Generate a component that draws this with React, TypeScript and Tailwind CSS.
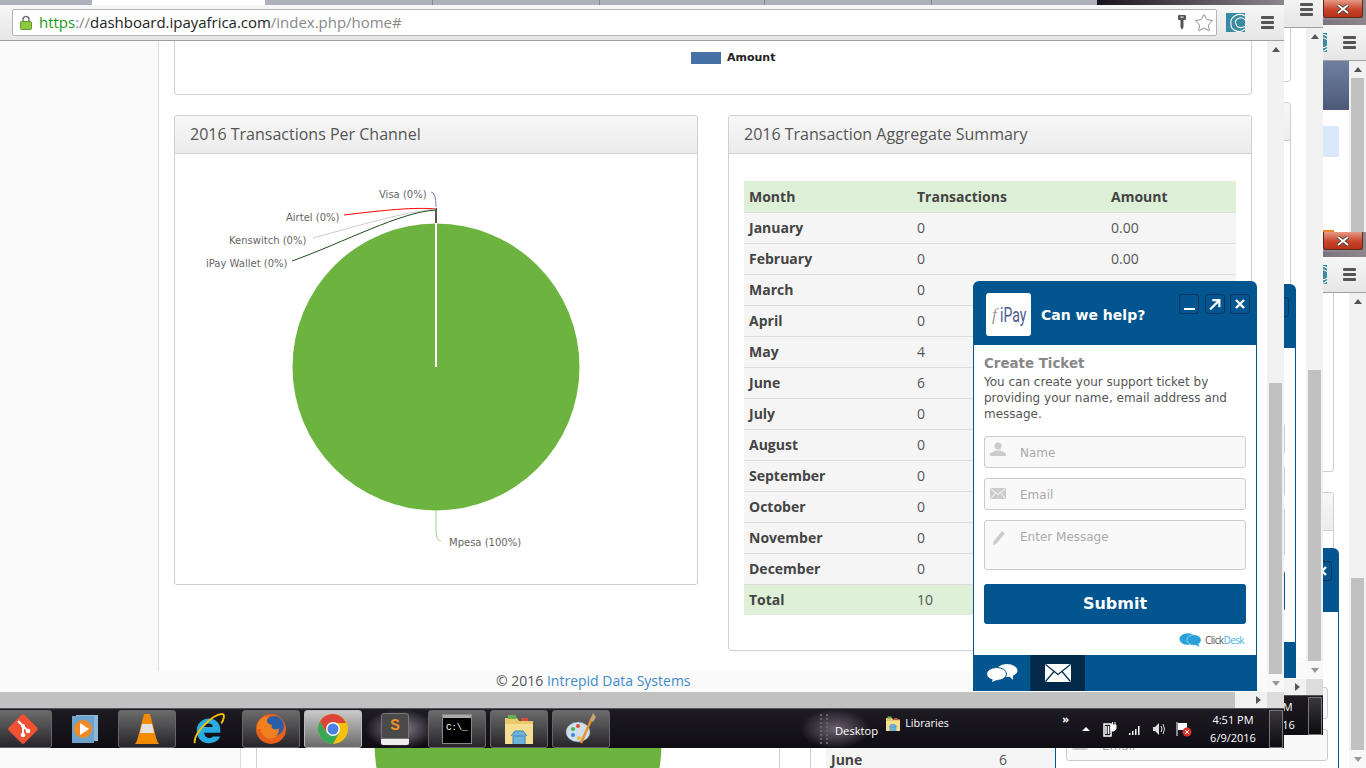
import React from 'react';
import { Star } from 'lucide-react';

const months = [
  { name: 'January', count: '0', amount: '0.00' },
  { name: 'February', count: '0', amount: '0.00' },
  { name: 'March', count: '0', amount: '' },
  { name: 'April', count: '0', amount: '' },
  { name: 'May', count: '4', amount: '' },
  { name: 'June', count: '6', amount: '' },
  { name: 'July', count: '0', amount: '' },
  { name: 'August', count: '0', amount: '' },
  { name: 'September', count: '0', amount: '' },
  { name: 'October', count: '0', amount: '' },
  { name: 'November', count: '0', amount: '' },
  { name: 'December', count: '0', amount: '' },
];

const PieChart = ({ labels }: { labels: boolean }) => (
  <svg viewBox="175 154 522 430" className="block w-[522px] h-[430px]">
    <circle cx="436" cy="367" r="143.5" fill="#6db33f" />
    <line x1="436" y1="223" x2="436" y2="367" stroke="#fff" strokeWidth="2" />
    <line x1="436" y1="208" x2="436" y2="223" stroke="#5c5548" strokeWidth="2" />
    <path d="M431 192 Q436 192 436 207" fill="none" stroke="#6f7fb5" strokeWidth="1" />
    <path d="M344 215 C385 210 415 207 436 209" fill="none" stroke="#ff0000" strokeWidth="1" />
    <path d="M313 238 C360 225 405 212 436 209" fill="none" stroke="#cccccc" strokeWidth="1" />
    <path d="M292 261 C345 242 400 212 436 210" fill="none" stroke="#1d4d1d" strokeWidth="1" />
    <path d="M436 510 L436 531 Q436 541 441 541" fill="none" stroke="#a6d184" strokeWidth="1" />
    {labels && (
      <g className="font-['DejaVu_Sans',sans-serif] text-[10px]" fill="#666">
        <text x="379" y="198">Visa (0%)</text>
        <text x="286" y="221">Airtel (0%)</text>
        <text x="229" y="244">Kenswitch (0%)</text>
        <text x="206" y="267">iPay Wallet (0%)</text>
        <text x="449" y="546">Mpesa (100%)</text>
      </g>
    )}
  </svg>
);

const PanelHeader = ({ title }: { title: string }) => (
  <div className="h-[38px] pl-[15px] pb-[2px] flex items-center text-[16px] text-[#555] bg-[linear-gradient(to_bottom,#f7f7f7,#ececec)] border-b border-[#d0d0d0] rounded-t-[3px]">
    {title}
  </div>
);

// `only` = the one table row this window still shows, the rest sits behind the window in front
const PageContent = ({ full, only }: { full: boolean; only?: string }) => {
  const show = (name: string) => full || name === only;
  return (
    <div className="pl-[15px] pb-[20px] w-[1093px] shrink-0 font-['Open_Sans',sans-serif]">
      <div className="h-[200px] w-[1078px] pt-[155px] pl-[516px] border border-[#d0d0d0] rounded-[3px] bg-white flex items-start gap-[6px]">
        <div className="w-[30px] h-[12px] mt-[1px] bg-[#4571a7]" />
        {full && <span className="text-[11px] leading-[14px] font-bold text-[#222] font-['DejaVu_Sans',sans-serif]">Amount</span>}
      </div>
      <div className="mt-[20px] flex items-start gap-[30px]">
        <section className="w-[524px] border border-[#d0d0d0] rounded-[3px] bg-white">
          <PanelHeader title={full ? '2016 Transactions Per Channel' : ''} />
          <PieChart labels={full} />
        </section>
        <section className="w-[524px] border border-[#d0d0d0] rounded-[3px] bg-white">
          <PanelHeader title={full ? '2016 Transaction Aggregate Summary' : ''} />
          <div className="px-[15px] pt-[27px] pb-[35px]">
            <table className="w-[492px] table-fixed border-collapse text-[14px] text-[#555]">
              <colgroup>
                <col className="w-[168px]" />
                <col className="w-[194px]" />
                <col />
              </colgroup>
              <thead>
                <tr className="h-[31px] bg-[#dff0d8] text-left font-bold text-[#444]">
                  <th className="pl-[5px]">{full && 'Month'}</th>
                  <th className="pl-[5px]">{full && 'Transactions'}</th>
                  <th className="pl-[5px]">{full && 'Amount'}</th>
                </tr>
              </thead>
              <tbody>
                {months.map((m) => (
                  <tr key={m.name} className="h-[31px] bg-[#f5f5f5] border-t border-[#ddd]">
                    <td className="pl-[5px] font-bold text-[#444]">{show(m.name) && m.name}</td>
                    <td className="pl-[5px]">{show(m.name) && m.count}</td>
                    <td className="pl-[5px]">{show(m.name) && m.amount}</td>
                  </tr>
                ))}
                <tr className="h-[31px] bg-[#dff0d8] border-t border-[#ddd]">
                  <td className="pl-[5px] font-bold text-[#444]">{full && 'Total'}</td>
                  <td className="pl-[5px]">{full && '10'}</td>
                  <td className="pl-[5px]" />
                </tr>
              </tbody>
            </table>
          </div>
        </section>
      </div>
    </div>
  );
};

const Page = ({ sidebar, scroll, full = false, only }: { sidebar: string; scroll: string; full?: boolean; only?: string }) => (
  <div className={scroll}>
    <div className="flex">
      <aside className={`${sidebar} shrink-0 bg-[#fafafa] border-r border-[#ddd]`} />
      <PageContent full={full} only={only} />
    </div>
    <div className="h-[22px] pl-[496px] bg-[#fafafa] text-[14px] leading-[20px] text-[#555] font-['Open_Sans',sans-serif]">
      {full && (
        <>
          © 2016 <span className="text-[#428bca]">Intrepid Data Systems</span>
        </>
      )}
    </div>
  </div>
);

const ChatButton = ({ children }: { children: React.ReactNode }) => (
  <div className="w-[20px] h-[20px] flex items-center justify-center border border-[#01365c] rounded-[3px]">{children}</div>
);

const Field = ({ icon, placeholder }: { icon: React.ReactNode; placeholder?: string }) => (
  <div className="relative h-[32px]">
    <div className="absolute left-[6px] top-[6px]">{icon}</div>
    <input
      readOnly
      placeholder={placeholder}
      className="w-full h-full pl-[35px] pt-[1px] bg-[#f9f9f9] border border-[#ccc] rounded-[3px] text-[12px] placeholder:text-[#aaa]"
    />
  </div>
);

const ChatWidget = ({ place, compact, emailText = true }: { place: string; compact?: boolean; emailText?: boolean }) => (
  <div className={`absolute ${place} w-[284px] flex flex-col font-['DejaVu_Sans',sans-serif]`}>
    <div className="h-[64px] shrink-0 pl-[13px] pr-[7px] bg-[#02558f] rounded-t-[6px] flex items-start">
      <div className="mt-[12px] w-[45px] h-[43px] bg-white rounded-[3px] flex items-center overflow-hidden">
        {!compact && (
          <>
            <span className="ml-[6px] text-[17px] italic text-[#999] font-['Liberation_Serif',serif]">f</span>
            <span className="ml-[3px] origin-left scale-x-[0.7] text-[20px] text-[#4a5c8c] font-['Roboto',sans-serif]">iPay</span>
          </>
        )}
      </div>
      {!compact && <span className="ml-[10px] mt-[26px] text-[14px] leading-[17px] font-bold text-white">Can we help?</span>}
      <div className="ml-auto mt-[13px] flex gap-[5.5px]">
        <ChatButton>
          <div className="w-[11px] h-[2px] mt-[9px] bg-white" />
        </ChatButton>
        <ChatButton>
          <svg viewBox="0 0 12 12" className="w-[13px] h-[13px]">
            <path d="M2 10.5 L9.5 3 M4 2 H10.5 V8.5" fill="none" stroke="#fff" strokeWidth="2" />
          </svg>
        </ChatButton>
        <ChatButton>
          <svg viewBox="0 0 12 12" className="w-[12px] h-[12px]">
            <path d="M2 2 L10 10 M10 2 L2 10" fill="none" stroke="#fff" strokeWidth="2.4" />
          </svg>
        </ChatButton>
      </div>
    </div>
    <div className="flex-1 min-h-0 flex flex-col px-[10px] bg-white border-x border-[#02558f]">
      <div className={compact ? 'pt-[1px] mb-[8px] h-[67px]' : 'pt-[10px] mb-[14px]'}>
        {!compact && (
          <>
            <h3 className="h-[19px] text-[13.4px] leading-[18px] font-bold text-[#888]">Create Ticket</h3>
            <p className="text-[12px] leading-[16px] text-[#555]">
              You can create your support ticket by providing your name, email address and message.
            </p>
          </>
        )}
      </div>
      <Field
        placeholder={compact ? undefined : 'Name'}
        icon={
          <svg viewBox="0 0 16 14" className="w-[16px] h-[14px]">
            <circle cx="8" cy="4" r="3.6" fill="#ccc" />
            <path d="M0 14 V11.5 L5.5 8.5 H10.5 L16 11.5 V14 Z" fill="#ccc" />
          </svg>
        }
      />
      <div className="mt-[10px]">
        <Field
          placeholder={emailText ? 'Email' : undefined}
          icon={
            <svg viewBox="0 0 16 11" className="w-[16px] h-[11px] mt-[4px]">
              <rect width="16" height="11" fill="#ccc" />
              <path d="M0.5 0.5 L8 6.5 L15.5 0.5 M0.5 10.5 L5.5 5 M15.5 10.5 L10.5 5" fill="none" stroke="#f9f9f9" strokeWidth="1" />
            </svg>
          }
        />
      </div>
      <div className="relative mt-[10px] h-[50px]">
        <svg viewBox="0 0 14 16" className="absolute left-[8px] top-[10px] w-[14px] h-[16px]">
          <path d="M10 1 L13 3.5 L4 14 L1 15 L1.5 11.5 Z" fill="#ccc" />
        </svg>
        <textarea
          readOnly
          placeholder={compact ? undefined : 'Enter Message'}
          className="block w-full h-full pl-[35px] pt-[8px] resize-none bg-[#f9f9f9] border border-[#ccc] rounded-[3px] text-[12px] leading-[16px] placeholder:text-[#aaa]"
        />
      </div>
      <button className="mt-[14px] h-[40px] shrink-0 bg-[#02558f] rounded-[3px] text-[16px] font-bold text-white">
        {!compact && 'Submit'}
      </button>
      {!compact && (
        <div className="mt-[8px] flex items-center justify-end pr-[2px] gap-[3px]">
          <svg viewBox="0 0 26 16" className="w-[23px] h-[16px]">
            <ellipse cx="10" cy="7" rx="9.5" ry="6.5" fill="#2aa0d8" />
            <ellipse cx="17" cy="8" rx="8" ry="6" fill="#2aa0d8" stroke="#fff" strokeWidth="0.5" />
            <path d="M16 12 L23 16 L21 10 Z" fill="#2aa0d8" />
          </svg>
          <span className="text-[10px] tracking-[-0.6px] text-[#555] font-['Open_Sans',sans-serif]">
            Click<span className="text-[#3fb4e0]">Desk</span>
          </span>
        </div>
      )}
    </div>
    <div className="h-[36px] shrink-0 bg-[#02558f] flex">
      <div className="w-[58px] flex items-center justify-center border-r border-[#01365c]">
        <svg viewBox="0 0 32 18" className="w-[32px] h-[18px]">
          <ellipse cx="21" cy="6.5" rx="10.5" ry="6.5" fill="#fff" />
          <path d="M22 11 L27 16 L27 10 Z" fill="#fff" />
          <ellipse cx="10.5" cy="10" rx="10" ry="6.5" stroke="#02558f" strokeWidth="1" fill="#fff" />
          <path d="M7 15 L6 18 L12 15.5 Z" fill="#fff" />
        </svg>
      </div>
      <div className="w-[54px] bg-[#012a4a] flex items-center justify-center">
        <svg viewBox="0 0 26 18" className="w-[26px] h-[18px]">
          <rect width="26" height="18" rx="1" fill="#fff" />
          <path d="M0.5 0.5 L13 10.5 L25.5 0.5 M0.5 17.5 L9 7.5 M25.5 17.5 L17 7.5" fill="none" stroke="#012a4a" strokeWidth="1.2" />
        </svg>
      </div>
    </div>
  </div>
);

const Hamburger = () => (
  <div className="w-[13px] flex flex-col gap-[2px]">
    <div className="h-[3px] bg-[#555] rounded-[1px]" />
    <div className="h-[3px] bg-[#555] rounded-[1px]" />
    <div className="h-[3px] bg-[#555] rounded-[1px]" />
  </div>
);

const Toolbar = ({ url }: { url: boolean }) => (
  <div className="h-[36px] shrink-0 flex items-center bg-[linear-gradient(to_bottom,#f6f6f6,#e6e6e6)] border-b border-[#a0a0a0]">
    <div className="ml-[12px] flex-1 min-w-0 h-[27px] flex items-center bg-white border border-[#b4b4b4] rounded-[2px] overflow-hidden">
      <svg viewBox="0 0 12 15" className="ml-[7px] w-[12px] h-[15px] shrink-0">
        <path d="M3 7 V4.5 a3 3 0 0 1 6 0 V7" fill="none" stroke="#777" strokeWidth="1.5" />
        <rect x="0.5" y="6.5" width="11" height="8" rx="1" fill="#8dc63f" stroke="#5f9a2a" />
      </svg>
      {url && (
        <span className="ml-[7px] text-[15px] tracking-[-0.02px] whitespace-nowrap text-[#888] font-['Open_Sans',sans-serif]">
          <span className="text-[#1a9a1a]">https</span>://<span className="text-[#222]">dashboard.ipayafrica.com</span>/index.php/home#
        </span>
      )}
      <svg viewBox="0 0 10 15" className="ml-auto w-[10px] h-[15px] shrink-0">
        <path d="M1 1 Q1 0 2 0 H8 Q9 0 9 1 V4 Q9 5 8 5 H6.5 V12 L5 15 L3.5 12 V5 H2 Q1 5 1 4 Z" fill="#555" />
        <rect x="3.5" y="1.5" width="3" height="1.2" fill="#eee" />
      </svg>
      <Star className="ml-[7px] mr-[2px] w-[20px] h-[20px] shrink-0 text-[#777]" strokeWidth={1} />
    </div>
    <svg viewBox="0 0 19 19" className="ml-[9px] w-[19px] h-[19px] shrink-0">
      <rect width="19" height="19" fill="#3a8aa3" />
      <path d="M19 3 a9 8 0 0 0 -14 8 a8 7 0 0 0 14 5 M19 7 a5 4 0 0 0 -9 4 a5 4 0 0 0 9 2" fill="none" stroke="#fff" strokeWidth="1.1" />
    </svg>
    <div className="ml-[16px] mr-[10px] shrink-0">
      <Hamburger />
    </div>
  </div>
);

const VScroll = ({ thumb }: { thumb: string }) => (
  <div className="w-[17px] shrink-0 flex flex-col bg-[#f1f1f1]">
    <div className="h-[17px] shrink-0 flex items-center justify-center">
      <div className="w-0 h-0 border-x-[4px] border-x-transparent border-b-[5px] border-b-[#555]" />
    </div>
    <div className={`${thumb} w-[13px] ml-[2px] shrink-0 bg-[#c1c1c1]`} />
    <div className="mt-auto h-[18px] shrink-0 flex items-center justify-center bg-[#f8f8f8] z-10">
      <div className="w-0 h-0 border-x-[4px] border-x-transparent border-t-[5px] border-t-[#999]" />
    </div>
  </div>
);

const HScroll = () => (
  <div className="h-[16px] shrink-0 flex bg-[#f1f1f1]">
    <div className="flex-1 bg-[#c1c1c1]" />
    <div className="w-[32px] flex items-center justify-end pr-[6px]">
      <div className="w-0 h-0 border-y-[4px] border-y-transparent border-l-[5px] border-l-[#555]" />
    </div>
    <div className="w-[17px] bg-[#dcdcdc]" />
  </div>
);

const TaskButton = ({ framed, active, children }: { framed?: boolean; active?: boolean; children: React.ReactNode }) => (
  <div
    className={`w-[58px] h-[38px] shrink-0 flex items-center justify-center rounded-[3px] ${
      active
        ? 'border border-[#bbb] bg-[linear-gradient(to_bottom,#c9c9c9,#6a6a6a)]'
        : framed
          ? 'border border-[#666] bg-[linear-gradient(to_bottom,#6b6b6b,#26242a)]'
          : ''
    }`}
  >
    {children}
  </div>
);

const GitIcon = () => (
  <svg viewBox="0 0 32 32" className="w-[32px] h-[32px]">
    <rect x="5" y="5" width="22" height="22" rx="2" transform="rotate(45 16 16)" fill="#f05133" />
    <path d="M11 8 L16 13 V22 M16 13 L21 18" fill="none" stroke="#fff" strokeWidth="2" />
    <circle cx="16" cy="13" r="2" fill="#fff" />
    <circle cx="16" cy="22" r="2.3" fill="#fff" />
    <circle cx="21" cy="18" r="2.3" fill="#fff" />
  </svg>
);

const PlayerIcon = () => (
  <svg viewBox="0 0 28 30" className="w-[28px] h-[30px]">
    <rect x="5" y="1" width="22" height="26" fill="#8fb8d8" />
    <rect x="1" y="2" width="22" height="27" fill="#6da3cc" />
    <circle cx="12" cy="15" r="9" fill="#f08a24" />
    <path d="M9 9 L18 15 L9 21 Z" fill="#fff" />
  </svg>
);

const VlcIcon = () => (
  <svg viewBox="0 0 28 34" className="w-[28px] h-[34px]">
    <path d="M2 32 L5 27 H23 L26 32 Z" fill="#f08a00" />
    <path d="M11 2 H17 L24 29 H4 Z" fill="#f58b00" />
    <path d="M9 12 H19 L21 21 H7 Z" fill="#e2e2e2" />
  </svg>
);

const IeIcon = () => (
  <svg viewBox="0 0 32 36" className="w-[32px] h-[34px]">
    <path d="M7 22 H28 C29 11 22 7 16 7 C8 7 3 13 3 20 C3 28 9 33 16 33 C22 33 26 30 28 26 H20 C18 29 11 28 11 22 Z M11 16 C12 11 20 11 20 16 Z" fill="#29abe2" fillRule="evenodd" />
    <path d="M1 33 C-1 24 18 3 30 2 C33 2 32 8 29 12" fill="none" stroke="#f7c200" strokeWidth="2" />
  </svg>
);

const FirefoxIcon = () => (
  <svg viewBox="0 0 32 36" className="w-[32px] h-[36px]">
    <circle cx="16" cy="18" r="15" fill="#e8601c" />
    <circle cx="19" cy="15" r="10" fill="#2b5da8" />
    <path d="M2 18 C2 8 10 4 14 6 C10 9 12 13 17 14 C15 18 21 20 24 17 C24 26 17 29 12 27 C8 25 6 22 6 18 Z" fill="#f0801e" />
  </svg>
);

const ChromeIcon = () => (
  <svg viewBox="0 0 32 32" className="w-[32px] h-[32px]">
    <circle cx="16" cy="16" r="15" fill="#f4c20d" />
    <path d="M16 1 A15 15 0 0 0 3 8.5 L9 19 L16 10 H29 A15 15 0 0 0 16 1 Z" fill="#db4437" />
    <path d="M3 8.5 A15 15 0 0 0 16 31 L22 20 L9 19 Z" fill="#3aa757" />
    <circle cx="16" cy="16" r="7" fill="#fff" />
    <circle cx="16" cy="16" r="5.5" fill="#4a80e8" />
  </svg>
);

const SublimeIcon = ({ label }: { label: boolean }) => (
  <div className="w-[28px] h-[32px] flex flex-col">
    <div className="h-[26px] bg-[#4a4a4a] border border-[#777] rounded-t-[3px] flex items-center justify-center text-[16px] font-bold text-[#e8912d] font-['Liberation_Mono',monospace]">
      {label && 'S'}
    </div>
    <div className="h-[6px] bg-[#eee] rounded-b-[2px]" />
  </div>
);

const CmdIcon = ({ label }: { label: boolean }) => (
  <div className="w-[30px] h-[30px] bg-black border border-[#888]">
    <div className="h-[3px] bg-[#aaa]" />
    {label && <div className="mt-[5px] ml-[3px] text-[9px] leading-[10px] text-white font-['Liberation_Mono',monospace]">C:\_</div>}
  </div>
);

const FolderIcon = ({ small }: { small?: boolean }) => (
  <svg viewBox="0 0 32 34" className={small ? 'w-[16px] h-[17px]' : 'w-[32px] h-[34px]'}>
    <path d="M2 6 H14 L16 9 H30 V32 H2 Z" fill="#eac96a" />
    <rect x="5" y="3" width="8" height="4" fill="#6ab04c" />
    <rect x="18" y="6" width="7" height="3" fill="#d84a3a" />
    <rect x="2" y="12" width="28" height="20" fill="#f5dd92" />
    <path d="M10 32 V24 H22 V32 M8 24 L12 19 H20 L24 24" fill="#6db3dc" stroke="#3d86b5" strokeWidth="1" />
  </svg>
);

const PaintIcon = () => (
  <svg viewBox="0 0 32 34" className="w-[32px] h-[34px]">
    <ellipse cx="13" cy="20" rx="12" ry="10" fill="#cfe0ea" stroke="#88a" strokeWidth="0.5" />
    <circle cx="8" cy="17" r="2" fill="#4caf50" />
    <circle cx="13" cy="14" r="2" fill="#e64a3a" />
    <circle cx="8" cy="23" r="2" fill="#3a8ae6" />
    <circle cx="14" cy="26" r="2" fill="#e6c23a" />
    <path d="M16 31 L27 6" stroke="#e8912d" strokeWidth="2.5" />
    <path d="M25 8 L28 1 L31 5 L28 10 Z" fill="#c9a27a" />
  </svg>
);

const Taskbar = ({ labels }: { labels: boolean }) => (
  <div className="relative h-[40px] shrink-0 flex items-center overflow-hidden border-t border-[#55525a] bg-[linear-gradient(to_bottom,#1e1b23,#0f0d13)] font-['Open_Sans',sans-serif] text-white">
    <div className="absolute left-[365px] top-0 w-[70px] h-[40px] bg-[radial-gradient(closest-side,#8c8090,transparent)]" />
    <div className="absolute left-[800px] top-0 w-[70px] h-[40px] bg-[radial-gradient(closest-side,#6c6270,transparent)]" />
    <div className="relative -ml-[6px] flex gap-[4px]">
      <TaskButton framed><GitIcon /></TaskButton>
      <TaskButton><PlayerIcon /></TaskButton>
      <TaskButton framed><VlcIcon /></TaskButton>
      <TaskButton><IeIcon /></TaskButton>
      <TaskButton framed><FirefoxIcon /></TaskButton>
      <TaskButton active><ChromeIcon /></TaskButton>
      <TaskButton><SublimeIcon label={labels} /></TaskButton>
      <TaskButton framed><CmdIcon label={labels} /></TaskButton>
      <TaskButton framed><FolderIcon /></TaskButton>
      <TaskButton framed><PaintIcon /></TaskButton>
    </div>
    <div className="relative ml-[210px] w-[8px] h-[30px] border-x-2 border-dotted border-[#666]" />
    {labels && (
      <>
        <span className="relative ml-[7px] mt-[6px] text-[11.2px]">Desktop</span>
        <div className="relative ml-[7px] -mt-[10px]"><FolderIcon small /></div>
        <span className="relative ml-[4px] -mt-[10px] text-[10.8px]">Libraries</span>
      </>
    )}
    <div className="relative ml-auto flex items-center">
      <span className="-mt-[20px] text-[11px] font-bold leading-none">»</span>
      <div className="ml-[13px] w-0 h-0 border-x-[4px] border-x-transparent border-b-[4px] border-b-white" />
      <svg viewBox="0 0 14 16" className="ml-[13px] w-[14px] h-[16px]">
        <path d="M1 3 H8 V15 H1 Z M3 5 V13 M5.5 5 V13" fill="none" stroke="#fff" strokeWidth="1.5" />
        <path d="M8 4 H13 V8 L11 10 H8 Z M9.5 1 V4 M12 1 V4" fill="#fff" stroke="#fff" />
      </svg>
      <svg viewBox="0 0 14 12" className="ml-[11px] w-[14px] h-[12px]">
        <path d="M1 10 h1.5 v2 h-1.5 Z M4 8 h1.5 v4 h-1.5 Z M7 6 h1.5 v6 h-1.5 Z M10 3 h1.5 v9 h-1.5 Z" fill="#fff" />
      </svg>
      <svg viewBox="0 0 14 14" className="ml-[10px] w-[14px] h-[14px]">
        <path d="M1 5 H3 L7 1 V13 L3 9 H1 Z" fill="#ddd" />
        <path d="M9 4 Q11 7 9 10 M11 2 Q14 7 11 12" fill="none" stroke="#ddd" />
      </svg>
      <svg viewBox="0 0 16 16" className="ml-[10px] w-[16px] h-[16px]">
        <path d="M1 1 V15" stroke="#fff" />
        <path d="M2 2 H11 V9 H2 Z" fill="#fff" />
        <circle cx="11" cy="11" r="4.5" fill="#d8322a" />
        <path d="M9 9 L13 13 M13 9 L9 13" stroke="#fff" />
      </svg>
      <div className="ml-[8px] w-[66px] text-center text-[11px] leading-[18px]">
        <div>4:51 PM</div>
        <div>6/9/2016</div>
      </div>
      <div className="ml-[3px] mr-[1px] w-[14px] h-[38px] border border-[#777] bg-[linear-gradient(to_bottom,#3a383e,#0c0b0f)]" />
    </div>
  </div>
);

const BrowserWindow = ({
  place,
  thumb,
  url = false,
  taskbar,
  labels = false,
  children,
}: {
  place: string;
  thumb: string;
  url?: boolean;
  taskbar?: boolean;
  labels?: boolean;
  children: React.ReactNode;
}) => (
  <div className={`absolute ${place} h-[768px] flex flex-col overflow-hidden bg-white`}>
    {/* frame; tab strip sits on its lower edge */}
    <div className="relative h-[25px] shrink-0 bg-[#8e858d] flex flex-col justify-end">
      <div className="absolute top-0 right-[3px] w-[40px] h-[18px] flex items-center justify-center rounded-b-[3px] border border-t-0 border-[#5a2a22] bg-[linear-gradient(to_bottom,#e59a88,#c8452a_55%,#b5321a)]">
        <svg viewBox="0 0 14 10" className="w-[14px] h-[10px]">
          <path d="M2 1 L12 9 M12 1 L2 9" stroke="#333" strokeWidth="3.5" />
          <path d="M2 1 L12 9 M12 1 L2 9" stroke="#fff" strokeWidth="2" />
        </svg>
      </div>
      <div className="h-[5px] flex">
        <div className="w-[92px] bg-[#aeb0bc]" />
        <div className="w-[173px] bg-white" />
        <div className="w-[168px] bg-[#aeb0bc] border-r border-[#888]" />
        <div className="w-[167px] bg-[#aeb0bc] border-r border-[#888]" />
        <div className="w-[165px] bg-[#aeb0bc] border-r border-[#888]" />
        <div className="w-[167px] bg-[#aeb0bc] border-r border-[#888]" />
        <div className="w-[165px] bg-[#aeb0bc]" />
        <div className="flex-1 bg-[linear-gradient(to_right,#17131c,#8e858d)]" />
      </div>
    </div>
    <Toolbar url={url} />
    <div className="flex-1 min-h-0 flex">
      <div className="flex-1 min-w-0 overflow-hidden bg-white">{children}</div>
      <VScroll thumb={thumb} />
    </div>
    {taskbar && (
      <>
        <HScroll />
        <Taskbar labels={labels} />
      </>
    )}
  </div>
);

export default function App() {
  return (
    <div className="relative w-[1366px] h-[768px] overflow-hidden bg-white">
      <BrowserWindow place="left-0 top-0 w-[1366px]" thumb="mt-0 h-[200px]">
        <div className="ml-[1323px] w-[26px] -mt-[1px]">
          <div className="h-[50px] bg-[linear-gradient(to_bottom,#7180a2,#4d5977)]" />
          <div className="mt-[16px] w-[16px] h-[31px] bg-[#d9e8fb]" />
          <div className="mt-[73px] w-[11px] h-[2px] bg-[#f08030]" />
        </div>
      </BrowserWindow>

      <BrowserWindow place="left-0 top-[232px] w-[1366px]" thumb="mt-[268px] h-[400px]">
        <Page sidebar="w-[241px]" scroll="-mt-[21px]" only="June" />
      </BrowserWindow>
      <div className="absolute left-0 top-[232px] w-[1366px] h-[536px]">
        <ChatWidget place="left-[1055px] top-[316px] h-[394px]" compact />
      </div>

      <BrowserWindow place="left-0 -top-[33px] w-[1323px]" thumb="mt-[325px] h-[291px]" taskbar>
        <Page sidebar="w-[198px]" scroll="-mt-[146px]" />
      </BrowserWindow>
      <div className="absolute left-0 -top-[33px] w-[1323px] h-[768px]">
        <ChatWidget place="left-[1012px] top-[317px] h-[394px]" compact emailText={false} />
      </div>

      <BrowserWindow place="left-0 -top-[20px] w-[1284px]" thumb="mt-[325px] h-[291px]" url taskbar labels>
        <Page sidebar="w-[159px]" scroll="-mt-[146px]" full />
      </BrowserWindow>
      <div className="absolute left-0 -top-[20px] w-[1284px] h-[768px]">
        <ChatWidget place="left-[973px] top-[301px] h-[410px]" />
      </div>
    </div>
  );
}
